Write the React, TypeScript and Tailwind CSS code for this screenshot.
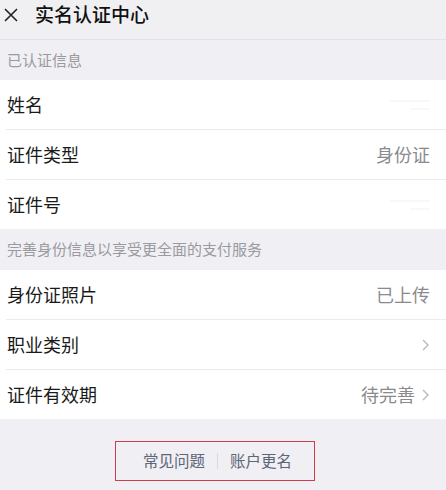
import React from 'react'

const font = { fontFamily: '"Noto Sans CJK SC", "Noto Sans", sans-serif' }

interface RowProps {
  label: string
  value?: string
  arrow?: boolean
  blurred?: boolean
  last?: boolean
}

const Chevron = () => (
  <svg width="9" height="14" viewBox="0 0 9 14" className="ml-[6px]">
    <path d="M2 2 L7 7 L2 12" fill="none" stroke="#b8b8bc" strokeWidth="1.4" />
  </svg>
)

const Row: React.FC<RowProps> = ({ label, value, arrow, blurred, last }) => (
  <div className="bg-white">
    <div className="h-[49px] flex items-center justify-between pl-[7px] pr-[16px]">
      <span className="text-[18px] text-[#1a1a1a]">{label}</span>
      <div className="flex items-center">
        {blurred && (
          <div className="flex flex-col items-end gap-[6px]">
            <div className="h-[2px] w-[40px] bg-[#f8f8f9]" />
            <div className="h-[2px] w-[20px] bg-[#f9f9fa]" />
          </div>
        )}
        {value && <span className="text-[18px] text-[#8a8a8e]">{value}</span>}
        {arrow && <Chevron />}
      </div>
    </div>
    {!last && <div className="ml-[6px] h-[1px] bg-[#ebebef]" />}
  </div>
)

const SectionTitle: React.FC<{ text: string; h: string }> = ({ text, h }) => (
  <div className={`${h} flex items-center pl-[7px] bg-[#efeff4] text-[15px] text-[#9a9aa0]`}>{text}</div>
)

export default function App() {
  return (
    <div className="w-[446px] h-[490px] bg-[#efeff4] overflow-hidden" style={font}>
      <div className="h-[40px] flex items-center border-b border-[#e2e2e8] bg-[#f0f0f3] pb-[10px]">
        <svg width="14" height="14" viewBox="0 0 14 14" className="ml-[4px]">
          <path d="M1 1 L13 13 M13 1 L1 13" stroke="#222" strokeWidth="1.6" />
        </svg>
        <span className="ml-[17px] text-[19px] text-[#111] font-medium">实名认证中心</span>
      </div>
      <SectionTitle text="已认证信息" h="h-[40px]" />
      <Row label="姓名" blurred />
      <Row label="证件类型" value="身份证" />
      <Row label="证件号" blurred last />
      <SectionTitle text="完善身份信息以享受更全面的支付服务" h="h-[41px]" />
      <Row label="身份证照片" value="已上传" />
      <Row label="职业类别" arrow />
      <Row label="证件有效期" value="待完善" arrow last />
      <div className="flex pt-[22px] pl-[115px]">
        <div className="w-[200px] h-[40px] border-[1.5px] border-[#d23a4e] flex items-center pl-[27px] text-[15.5px] text-[#5d6577]">
          <span>常见问题</span>
          <span className="mx-[12px] h-[16px] w-[1px] bg-[#d8d8dd]" />
          <span>账户更名</span>
        </div>
      </div>
    </div>
  )
}
